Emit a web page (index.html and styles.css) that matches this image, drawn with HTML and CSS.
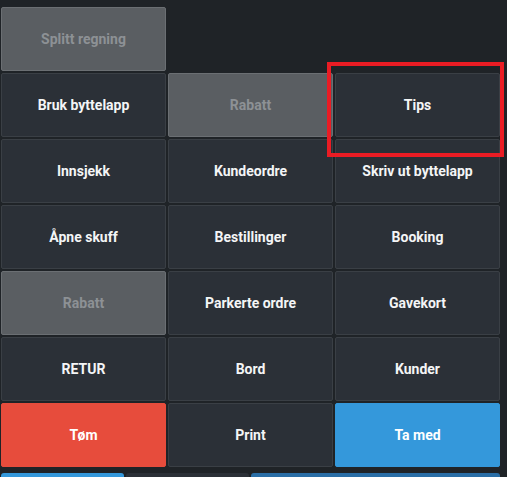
FILE: index.html
```html
<!DOCTYPE html>
<html lang="no">
<head>
<meta charset="utf-8">
<link rel="stylesheet" href="styles.css">
</head>
<body>
<div class="panel">
  <div class="grid">
    <button class="btn disabled">Splitt regning</button>
    <div class="empty"></div>
    <div class="empty"></div>
    <button class="btn">Bruk byttelapp</button>
    <button class="btn disabled">Rabatt</button>
    <button class="btn">Tips</button>
    <button class="btn">Innsjekk</button>
    <button class="btn">Kundeordre</button>
    <button class="btn">Skriv ut byttelapp</button>
    <button class="btn">Åpne skuff</button>
    <button class="btn">Bestillinger</button>
    <button class="btn">Booking</button>
    <button class="btn disabled">Rabatt</button>
    <button class="btn">Parkerte ordre</button>
    <button class="btn">Gavekort</button>
    <button class="btn">RETUR</button>
    <button class="btn">Bord</button>
    <button class="btn">Kunder</button>
    <button class="btn red">Tøm</button>
    <button class="btn">Print</button>
    <button class="btn blue">Ta med</button>
  </div>
  <div class="bottom">
    <div class="tab tab-blue"></div>
    <div class="tab tab-dark"></div>
    <div class="tab tab-navy"></div>
  </div>
  <div class="highlight"></div>
</div>
</body>
</html>
```
FILE: styles.css
```css
html, body {
  margin: 0;
  padding: 0;
  background: #1f2327;
  width: 507px;
  height: 477px;
  overflow: hidden;
}
.panel {
  position: relative;
  padding: 7px 7px 0 1px;
}
.grid {
  display: grid;
  grid-template-columns: repeat(3, 165px);
  grid-auto-rows: 64px;
  gap: 2px;
}
.btn {
  box-sizing: border-box;
  margin: 0;
  background: #2b3037;
  border: 1px solid #3a3f45;
  border-radius: 2px;
  color: #f4f5f6;
  font-family: Roboto, "Liberation Sans", sans-serif;
  font-weight: 700;
  font-size: 14px;
  padding: 0;
}
.btn.disabled {
  background: #5a5e62;
  border-color: #6b6f73;
  color: #8d9195;
}
.btn.red {
  background: #e74c3c;
  border-color: #e74c3c;
  color: #fff;
}
.btn.blue {
  background: #3498db;
  border-color: #3498db;
  color: #fff;
}
.bottom {
  display: flex;
  gap: 2px;
  margin-top: 6px;
}
.tab {
  height: 10px;
  border-radius: 3px 3px 0 0;
}
.tab-blue {
  width: 123px;
  background: #3498db;
}
.tab-dark {
  width: 123px;
  background: #2b3037;
}
.tab-navy {
  width: 250px;
  background: #2a6ea6;
}
.highlight {
  position: absolute;
  left: 327px;
  top: 62px;
  width: 169px;
  height: 87px;
  border: 4px solid #ea1c24;
}
```
